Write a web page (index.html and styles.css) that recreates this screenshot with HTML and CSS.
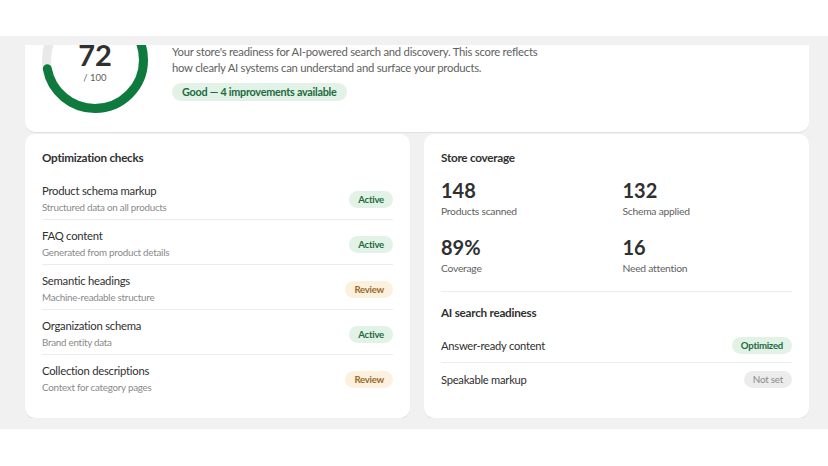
FILE: index.html
```html
<!DOCTYPE html>
<html lang="en">
<head>
    <meta charset="UTF-8">
    <meta name="viewport" content="width=device-width, initial-scale=1.0">
    <title>AI Visibility</title>
<link rel="stylesheet" href="styles.css">
</head>
<body>
    <div class="topbar"></div>
    <div class="main">
        <div class="scroller">
            <div class="content">
                <div class="card hero">
                    <div class="ring">
                        <svg width="106" height="106" viewBox="0 0 106 106">
                            <circle cx="53" cy="53" r="48.5" fill="none" stroke="#e9e9e9" stroke-width="9"/>
                            <circle cx="53" cy="53" r="48.5" fill="none" stroke="#0f7a3e" stroke-width="9"
                                stroke-dasharray="219.4 304.7" stroke-linecap="round" transform="rotate(-90 53 53)"/>
                        </svg>
                        <div class="ring-label">
                            <div class="score">72</div>
                            <div class="out-of">/ 100</div>
                        </div>
                    </div>
                    <div class="hero-text">
                        <div class="hero-title">AI visibility score</div>
                        <p class="desc">Your store's readiness for AI-powered search and discovery. This score reflects<br>how clearly AI systems can understand and surface your products.</p>
                        <span class="badge good">Good — 4 improvements available</span>
                    </div>
                </div>

                <div class="columns">
                    <div class="card">
                        <h2>Optimization checks</h2>
                        <div class="check">
                            <div>
                                <div class="check-title">Product schema markup</div>
                                <div class="check-sub">Structured data on all products</div>
                            </div>
                            <span class="badge good">Active</span>
                        </div>
                        <div class="check">
                            <div>
                                <div class="check-title">FAQ content</div>
                                <div class="check-sub">Generated from product details</div>
                            </div>
                            <span class="badge good">Active</span>
                        </div>
                        <div class="check">
                            <div>
                                <div class="check-title">Semantic headings</div>
                                <div class="check-sub">Machine-readable structure</div>
                            </div>
                            <span class="badge warn">Review</span>
                        </div>
                        <div class="check">
                            <div>
                                <div class="check-title">Organization schema</div>
                                <div class="check-sub">Brand entity data</div>
                            </div>
                            <span class="badge good">Active</span>
                        </div>
                        <div class="check">
                            <div>
                                <div class="check-title">Collection descriptions</div>
                                <div class="check-sub">Context for category pages</div>
                            </div>
                            <span class="badge warn">Review</span>
                        </div>
                    </div>

                    <div class="card">
                        <h2>Store coverage</h2>
                        <div class="stats">
                            <div>
                                <div class="stat-num">148</div>
                                <div class="stat-label">Products scanned</div>
                            </div>
                            <div>
                                <div class="stat-num">132</div>
                                <div class="stat-label">Schema applied</div>
                            </div>
                            <div>
                                <div class="stat-num">89%</div>
                                <div class="stat-label">Coverage</div>
                            </div>
                            <div>
                                <div class="stat-num">16</div>
                                <div class="stat-label">Need attention</div>
                            </div>
                        </div>
                        <h2 class="sub-head">AI search readiness</h2>
                        <div class="ready">
                            <span>Answer-ready content</span>
                            <span class="badge good">Optimized</span>
                        </div>
                        <div class="ready">
                            <span>Speakable markup</span>
                            <span class="badge muted">Not set</span>
                        </div>
                    </div>
                </div>
            </div>
        </div>
    </div>
</body>
</html>
```

FILE: styles.css
```css
body {
    margin: 0;
    background: #fff;
    color: #303030;
    font-family: Lato, "Open Sans", sans-serif;
    font-size: 11.3px;
    letter-spacing: -0.25px;
}
.topbar {
    height: 36px;
    background: #fff;
}
.main {
    background: #f1f1f1;
    padding: 9px 19px 11px 25px;
}
.scroller {
    overflow: hidden;
}
.content {
    margin-top: -54px;
}
.card {
    background: #fff;
    border-radius: 10px;
    box-shadow: 0 1px 0 rgba(0, 0, 0, 0.07);
    padding: 16px 17px 19px;
}
.hero {
    display: flex;
    gap: 24px;
}
.ring {
    position: relative;
    width: 106px;
    height: 106px;
}
.ring svg {
    display: block;
}
.ring-label {
    position: absolute;
    inset: 0;
    padding-top: 4px;
    display: flex;
    flex-direction: column;
    align-items: center;
    justify-content: center;
}
.score {
    font-size: 29px;
    font-weight: 700;
    line-height: 32px;
    letter-spacing: 0;
}
.out-of {
    font-size: 9.5px;
    color: #616161;
    line-height: 14px;
    letter-spacing: 0;
}
.hero-title {
    font-size: 13px;
    font-weight: 700;
    line-height: 20px;
    margin-bottom: 17px;
}
.desc {
    margin: 0 0 7px;
    color: #616161;
    line-height: 16px;
}
.badge {
    display: inline-block;
    border-radius: 10px;
    padding: 0 9px;
    font-size: 9.6px;
    font-weight: 700;
    line-height: 17px;
    white-space: nowrap;
}
.hero .badge {
    padding: 0 10px;
    font-size: 10.8px;
    line-height: 18px;
}
.good {
    background: #e3f2e7;
    color: #1b6b3e;
}
.warn {
    background: #fcf1de;
    color: #9a6a25;
}
.muted {
    background: #ececec;
    color: #8a8a8a;
    font-weight: 400;
    font-size: 9.9px;
}
.columns {
    display: grid;
    grid-template-columns: 1fr 1fr;
    gap: 14px;
    margin-top: 2px;
}
h2 {
    margin: 0 0 9px;
    font-size: 11.7px;
    font-weight: 700;
    line-height: 15px;
    padding-bottom: 1px;
}
.check {
    display: flex;
    align-items: center;
    justify-content: space-between;
    padding: 8px 0 4px;
    border-bottom: 1px solid #ececec;
}
.check:last-child {
    border-bottom: none;
}
.check-title {
    font-size: 11.3px;
    line-height: 16px;
}
.check-sub {
    font-size: 9.8px;
    line-height: 16px;
    color: #8a8a8a;
}
.stats {
    display: grid;
    grid-template-columns: 1fr 1fr;
    column-gap: 12px;
    row-gap: 15px;
    margin-top: 11px;
    padding-bottom: 15px;
    border-bottom: 1px solid #ececec;
}
.stat-num {
    font-size: 20px;
    font-weight: 700;
    line-height: 26px;
    letter-spacing: 0;
}
.stat-label {
    font-size: 10.3px;
    color: #616161;
    line-height: 16px;
}
.sub-head {
    margin: 13px 0 8px;
}
.ready {
    display: flex;
    align-items: center;
    justify-content: space-between;
    padding: 8px 0;
    font-size: 11.2px;
    border-bottom: 1px solid #ececec;
}
.ready:last-child {
    border-bottom: none;
}
```
